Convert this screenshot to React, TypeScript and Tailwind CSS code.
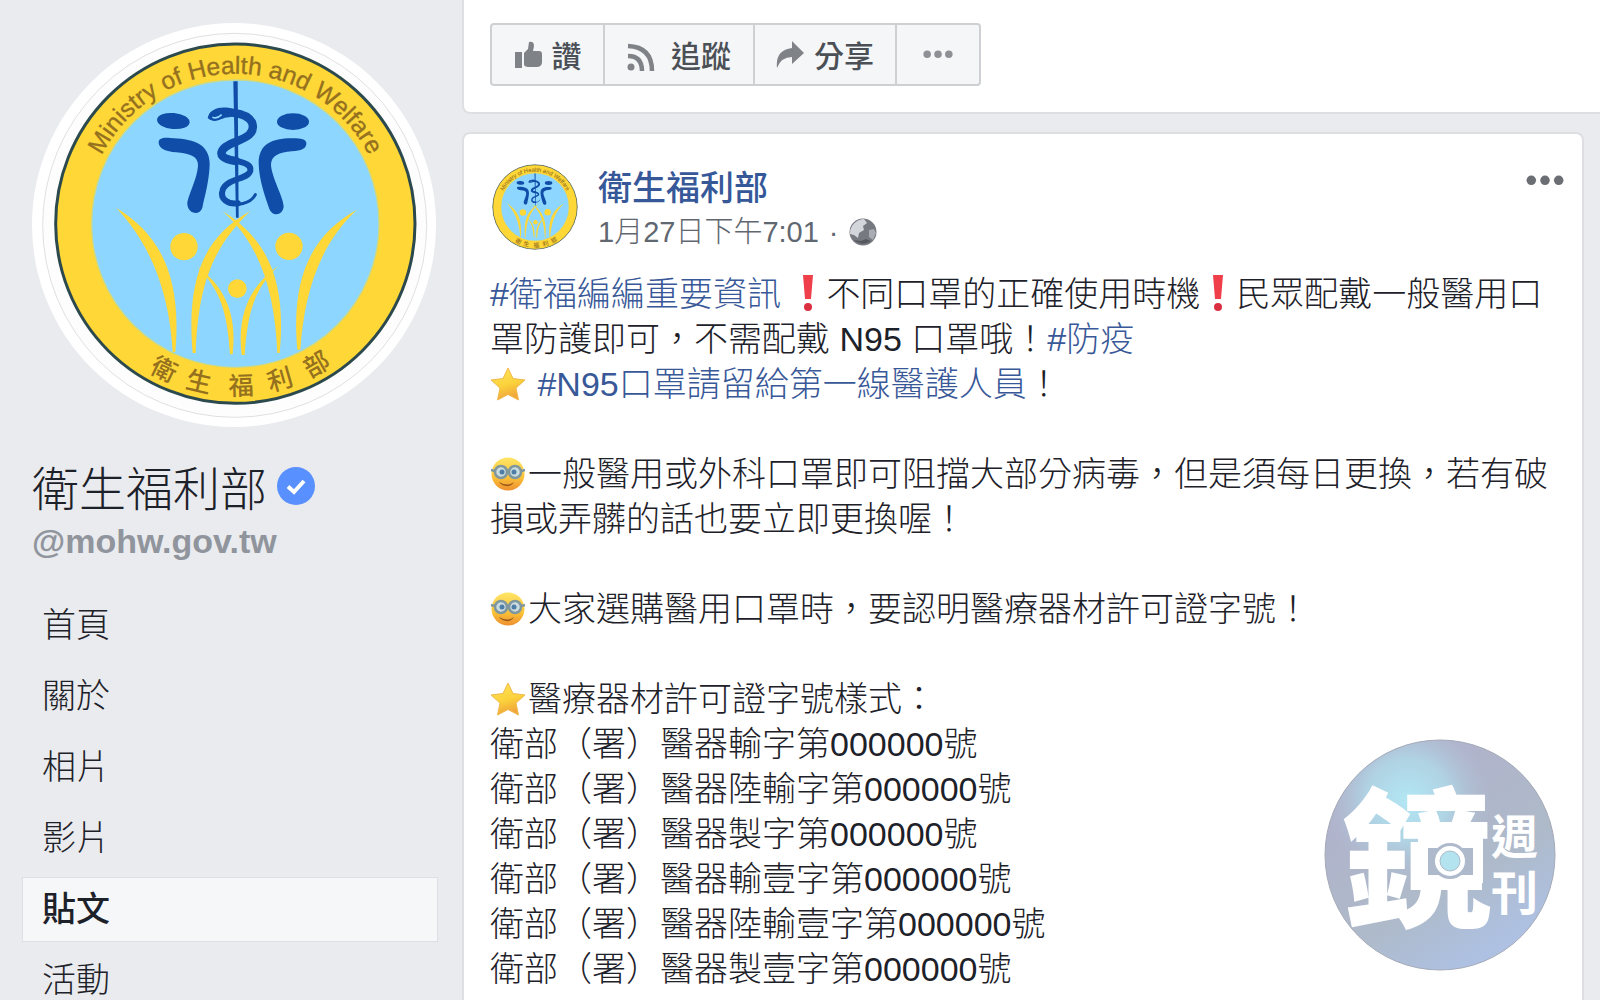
import { clsx } from "clsx";

const navItems = [
  { label: "首頁" },
  { label: "關於" },
  { label: "相片" },
  { label: "影片" },
  { label: "貼文", active: true },
  { label: "活動" },
];

const licenses = ["輸字", "陸輸字", "製字", "輸壹字", "陸輸壹字", "製壹字"];

const sealChars = [
  { char: "衛", angle: 26 },
  { char: "生", angle: 13 },
  { char: "福", angle: -2 },
  { char: "利", angle: -16 },
  { char: "部", angle: -30 },
];

function Emblem({ id, viewBox, className }: { id: string; viewBox: string; className: string }) {
  return (
    <svg viewBox={viewBox} className={className} role="img" aria-label="衛生福利部">
      <defs>
        <path id={id} d="M257 670a450 450 0 0 1 900 0" />
      </defs>
      <circle cx="703" cy="674" r="606" fill="#fff" />
      <circle cx="705" cy="675" r="576" fill="#fdfdfe" stroke="#e2dfe2" strokeWidth="3" />
      <circle cx="707" cy="670" r="539" fill="#ffd736" stroke="#2c4a4e" strokeWidth="9" />
      <circle cx="707" cy="670" r="431" fill="#8cd6ff" stroke="#c8d98c" strokeWidth="4" />
      <text fontSize="74" fill="#94701f" stroke="#94701f" strokeWidth="1" textAnchor="middle" className="font-['Liberation_Sans',sans-serif]">
        <textPath href={`#${id}`} startOffset="50%">Ministry of Health and Welfare</textPath>
      </text>
      {sealChars.map(({ char, angle }) => (
        <text key={char} x="707" y="1184" fontSize="76" fill="#94701f" textAnchor="middle" className="font-medium" transform={`rotate(${angle} 707 670)`}>
          {char}
        </text>
      ))}

      {/* Staff, snake and the two side figures */}
      <g fill="#0f4da8">
        <ellipse cx="521" cy="362" rx="49" ry="24" transform="rotate(5 521 362)" />
        <ellipse cx="880" cy="364" rx="48" ry="25" />
        <path d="M477 428C476 414 490 411 512 413C570 415 631 425 630 492C629 540 615 590 608 622C601 646 566 643 563 612C562 590 594 535 595 494C596 468 568 459 530 456C498 453 479 445 477 428Z" />
        <path d="M920 428C919 417 905 414 880 414C820 413 777 430 777 488C778 540 797 590 808 623C816 650 850 648 852 618C851 590 817 534 814 495C813 466 840 456 876 453C905 451 921 445 920 428Z" />
        <path d="M701 243H714L717 652H709Z" />
      </g>
      <g fill="none" stroke="#0f4da8" strokeLinecap="round">
        <path d="M640 347C670 330 738 333 757 366C774 414 705 419 679 439C648 463 674 478 709 482" strokeWidth="25" />
        <path d="M674 469C710 486 757 484 752 511C746 538 687 532 670 566C658 598 687 613 715 609" strokeWidth="18" />
        <path d="M681 599C710 622 754 609 767 583" strokeWidth="9" />
      </g>
      <path d="M624 353C632 321 670 317 700 326L690 351C665 349 650 375 624 353Z" fill="#0f4da8" />
      <path d="M638 351q14 6 28 -8" fill="none" stroke="#8cd6ff" strokeWidth="5" />

      {/* Raised arms */}
      <g fill="#ffd736">
        <circle cx="553" cy="739" r="41" />
        <circle cx="868" cy="738" r="41" />
        <circle cx="713" cy="865" r="28" />
        <path d="M350 623C460 690 550 800 527 1055H519C512 930 480 760 350 623Z" />
        <path d="M1072 628C960 690 870 800 893 1048H902C912 900 950 740 1072 628Z" />
        <path d="M752 632C610 710 560 840 579 1058H588C596 850 640 740 752 632Z" />
        <path d="M668 632C810 720 860 850 840 1058H833C825 870 780 730 668 632Z" />
        <path d="M590 797C665 850 715 930 699 1062H691C683 930 660 865 590 797Z" />
        <path d="M836 797C760 850 710 930 726 1064H735C744 930 765 865 836 797Z" />
      </g>
    </svg>
  );
}

function Star() {
  return (
    <svg viewBox="0 0 36 36" className="mr-0.5 inline-block size-9 align-text-bottom" role="img" aria-label="星星">
      <defs>
        <linearGradient id="star" x1="0" y1="0" x2="0.3" y2="1">
          <stop offset="0" stopColor="#ffe45c" />
          <stop offset="0.6" stopColor="#fbd23b" />
          <stop offset="1" stopColor="#f0a63a" />
        </linearGradient>
      </defs>
      <path d="M18 1l5 10.500 12 1.500-9 8 2.500 12L18 27.500 7.500 33 10 21 1 13l12-1.500z" fill="url(#star)" stroke="#f1b84a" strokeLinejoin="round" />
    </svg>
  );
}

function Exclamation() {
  return (
    <svg viewBox="0 0 36 40" className="inline-block h-10 w-9 align-text-bottom" role="img" aria-label="驚嘆號">
      <path d="M13 2h10l-2 24h-6z" fill="#ee3f4b" />
      <circle cx="18" cy="34" r="4" fill="#d92f40" />
    </svg>
  );
}

function NerdFace() {
  return (
    <svg viewBox="0 0 36 36" className="mr-0.5 inline-block size-9 align-text-bottom" role="img" aria-label="眼鏡笑臉">
      <defs>
        <linearGradient id="face" x1="0" y1="0" x2="0" y2="1">
          <stop offset="0" stopColor="#ffe566" />
          <stop offset="0.6" stopColor="#fbc238" />
          <stop offset="1" stopColor="#ee8f2f" />
        </linearGradient>
      </defs>
      <circle cx="18" cy="17" r="16.500" fill="url(#face)" />
      <g fill="#c9dbe0" stroke="#7f979d" strokeWidth="2.500">
        <circle cx="11" cy="15" r="6" />
        <circle cx="25" cy="15" r="6" />
        <path d="M17 14q1-1 2 0M5 14l-4-1M31 14l4-1" fill="none" />
      </g>
      <circle cx="12" cy="15" r="2.500" fill="#4f7da5" />
      <circle cx="24" cy="15" r="2.500" fill="#4f7da5" />
      <path d="M9 25q9 5 15 0-3 5-8 4-5-1-7-4z" fill="#9a5a1c" />
    </svg>
  );
}

function Globe() {
  return (
    <svg viewBox="0 0 28 28" className="size-7" role="img" aria-label="公開">
      <circle cx="14" cy="14" r="13.500" fill="#767a80" />
      <path d="M3 8Q8 1 15 1l3 4-4 3 1 4-5 3-1 5-4-3-4-1Q1 11 3 8z" fill="#d3d6da" />
      <path d="M20 12l5-1 2 4-3 7-4-3z" fill="#a9adb3" />
      <path d="M5 22q8 7 17 1l-5-2-5 2z" fill="#565a60" />
    </svg>
  );
}

function Dots({ className }: { className: string }) {
  return (
    <svg viewBox="0 0 36 10" className={className} fill="currentColor" aria-hidden="true">
      <circle cx="5" cy="5" r="4.500" />
      <circle cx="18" cy="5" r="4.500" />
      <circle cx="31" cy="5" r="4.500" />
    </svg>
  );
}

function MirrorLogo() {
  return (
    <svg viewBox="0 0 232 232" className="absolute right-11 bottom-[29px] size-58 overflow-visible" role="img" aria-label="鏡週刊">
      <defs>
        <linearGradient id="disc" x1="0" y1="0" x2="0.6" y2="1">
          <stop offset="0.3" stopColor="#b0b3cb" />
          <stop offset="0.7" stopColor="#aebac9" />
          <stop offset="1" stopColor="#aec1e3" />
        </linearGradient>
        <radialGradient id="glow" cx="0.36" cy="0.26" r="0.36">
          <stop offset="0" stopColor="#b2e7f4" />
          <stop offset="0.5" stopColor="#b0dbea" stopOpacity="0.800" />
          <stop offset="1" stopColor="#b0c0d6" stopOpacity="0" />
        </radialGradient>
      </defs>
      <circle cx="116" cy="116" r="115" fill="url(#disc)" />
      <circle cx="116" cy="116" r="115" fill="url(#glow)" stroke="#a5aab8" />
      <g fill="#fff" className="font-['Noto_Sans_CJK_TC',sans-serif] font-black">
        <text x="18" y="176" fontSize="150">鏡</text>
        <text x="167" y="115" fontSize="47" className="font-bold">週</text>
        <text x="167" y="171" fontSize="47" className="font-bold">刊</text>
      </g>
      {/* Camera lens */}
      <rect x="94" y="97" width="65" height="47" fill="#fff" />
      <rect x="104" y="109" width="45" height="27" fill="#aeb9cb" />
      <circle cx="126" cy="122" r="18" fill="#aeb9cb" />
      <circle cx="126" cy="122" r="15" fill="#fff" />
      <circle cx="126" cy="122" r="10" fill="#b2e3ee" stroke="#a9bccb" />
    </svg>
  );
}

function HashTag({ children }: { children: string }) {
  return <a href="#tag" className="text-[#385898]">{children}</a>;
}

export default function App() {
  return (
    <div lang="zh-Hant" className="relative flex h-screen overflow-hidden bg-[#e9ebee] font-['Liberation_Sans','Noto_Sans_CJK_TC',sans-serif] text-[#1d2129]">
      <aside className="w-[462px] shrink-0 pt-[23px]">
        <Emblem id="arc-large" viewBox="97 68 1212 1212" className="ml-8 size-101" />
        <div className="mt-[34px] ml-8 flex items-center gap-2.5">
          <h1 className="text-[47px] leading-[58px] font-light">衛生福利部</h1>
          <svg viewBox="0 0 38 38" className="mb-2 size-[38px]" role="img" aria-label="已驗證">
            <circle cx="19" cy="19" r="19" fill="#5890ff" />
            <path d="M11 19.500l6 5.500 10-11" fill="none" stroke="#fff" strokeWidth="4" />
          </svg>
        </div>
        <p className="ml-8 text-[34px] leading-[44px] font-bold text-[#90949c]">@mohw.gov.tw</p>
        <nav className="mt-[30px] mr-6 ml-[22px] flex flex-col gap-1.5">
          {navItems.map(({ label, active }) => (
            <a
              key={label}
              href="#nav"
              className={clsx(
                "flex h-[65px] items-center border pl-[19px] text-[34px]",
                active ? "border-[#dddfe2] bg-[#f6f7f9] font-medium" : "border-transparent font-light"
              )}
            >
              {label}
            </a>
          ))}
        </nav>
      </aside>

      <main className="flex min-w-0 flex-1 flex-col gap-[18px]">
        <section className="rounded-bl-lg border-b-2 border-l-2 border-[#dddfe2] bg-white pt-[23px] pb-[26px] pl-[26px]">
          <div className="flex h-[63px] w-fit divide-x-2 divide-[#ced0d4] rounded-sm border-2 border-[#ced0d4] bg-[#f5f6f7] text-[30px] font-medium text-[#4b4f56]">
            <button className="flex w-[113px] items-center justify-center gap-2.5 pt-1">
              <svg viewBox="0 0 28 28" className="mb-1 size-7" fill="#7f8287" aria-hidden="true">
                <path d="M1 11h7v16H1zM10 12l4-4 1-7q5-1 5 4l-1 5h6q3 0 3 3v9q-1 4-5 4H14q-3 0-4-2z" />
              </svg>
              讚
            </button>
            <button className="flex w-[150px] items-center justify-center gap-4 pt-1">
              <svg viewBox="0 0 28 28" className="size-7" aria-hidden="true">
                <circle cx="4" cy="24" r="3.500" fill="#7f8287" />
                <path d="M1 13q14 0 14 15M1 3q24 1 24 25" fill="none" stroke="#7f8287" strokeWidth="4.500" />
              </svg>
              追蹤
            </button>
            <button className="flex w-[142px] items-center justify-center gap-2.5 pt-1">
              <svg viewBox="0 0 28 28" className="mb-1 size-7" fill="#7f8287" aria-hidden="true">
                <path d="M16 0l12 12-12 11v-7Q5 16 1 27-1 9 16 7z" />
              </svg>
              分享
            </button>
            <button aria-label="更多" className="flex w-[82px] items-center justify-center text-[#8d9095]">
              <Dots className="w-[30px]" />
            </button>
          </div>
        </section>

        <article className="mr-4 flex-1 rounded-t-lg border-2 border-b-0 border-[#dddfe2] bg-white pt-[30px] pr-6 pl-[26px]">
          <header className="flex items-start pl-0.5">
            <Emblem id="arc-small" viewBox="160 122 1094 1096" className="size-[86px] rounded-full" />
            <div className="ml-5 flex-1">
              <a href="#page" className="block text-[34px] leading-[48px] font-medium text-[#365899]">衛生福利部</a>
              <div className="flex items-center gap-2.5 text-[29px] leading-[40px] font-light text-[#616770]">
                <span>1月27日下午7:01</span>
                <span>·</span>
                <Globe />
              </div>
            </div>
            <button aria-label="貼文選項" className="mt-[11px] mr-[-6px] text-[#6b6e73]">
              <Dots className="w-[38px]" />
            </button>
          </header>

          <div className="mt-5 text-[34px] leading-[45px] font-light">
            <p>
              <HashTag>#衛福編編重要資訊</HashTag> <Exclamation />不同口罩的正確使用時機<Exclamation />民眾配戴一般醫用口罩防護即可，不需配戴 N95 口罩哦！<HashTag>#防疫</HashTag>
            </p>
            <p className="mb-[45px]">
              <Star /> <HashTag>#N95口罩請留給第一線醫護人員</HashTag>！
            </p>
            <p className="mb-[45px]">
              <NerdFace />一般醫用或外科口罩即可阻擋大部分病毒，但是須每日更換，若有破損或弄髒的話也要立即更換喔！
            </p>
            <p className="mb-[45px]">
              <NerdFace />大家選購醫用口罩時，要認明醫療器材許可證字號！
            </p>
            <p>
              <Star />醫療器材許可證字號樣式：
            </p>
            {licenses.map((kind) => (
              <p key={kind}>衛部（署）醫器{kind}第000000號</p>
            ))}
          </div>
        </article>
      </main>

      <MirrorLogo />
    </div>
  );
}
